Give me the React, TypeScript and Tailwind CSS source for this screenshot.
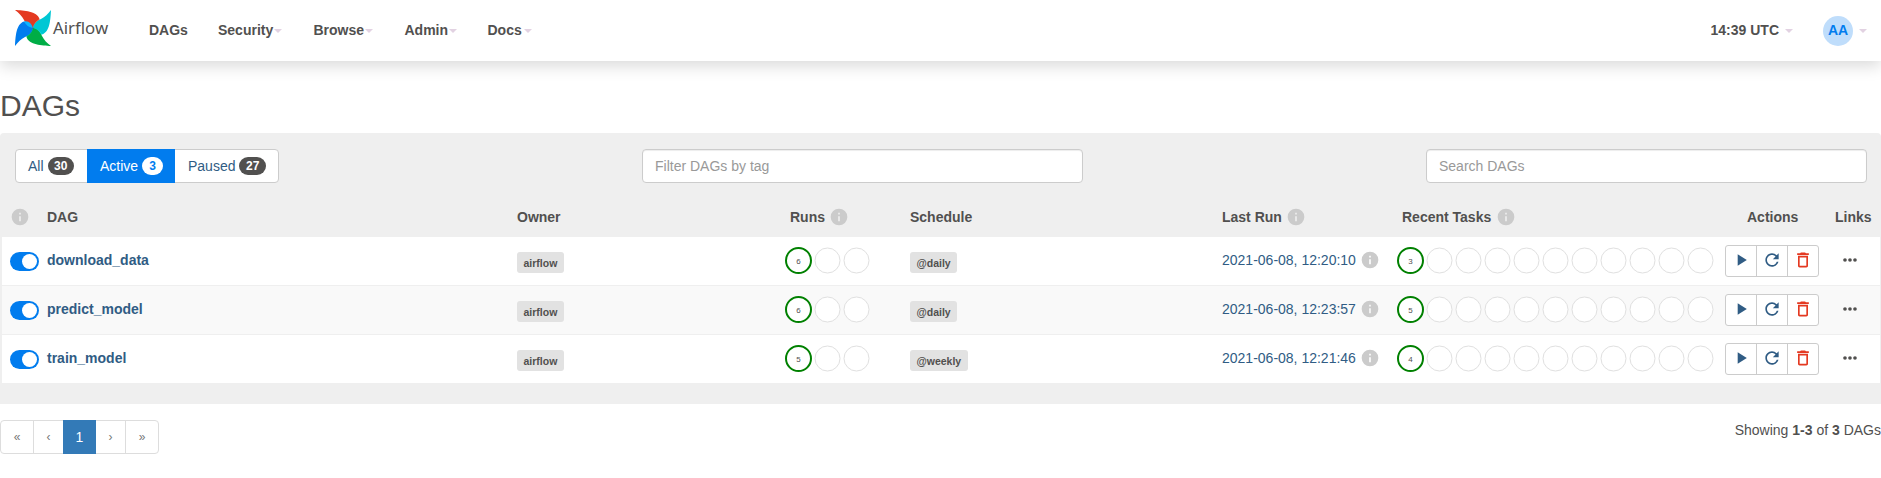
import type { ReactNode } from "react";

const columns =
  "grid grid-cols-[45px_470px_268px_125px_312px_175px_328px_110px_1fr]";

function Caret({ className = "" }: { className?: string }) {
  return (
    <span
      className={`mt-[2px] inline-block border-x-4 border-t-4 border-x-transparent border-t-[#e2d2e2] ${className}`}
    />
  );
}

function Info({ className = "" }: { className?: string }) {
  return (
    <svg viewBox="0 0 20 20" className={`size-5 shrink-0 fill-[#cbcbcb] ${className}`}>
      <path d="M10 1.67a8.33 8.33 0 1 0 0 16.66 8.33 8.33 0 0 0 0-16.66zm.83 12.5H9.17v-5h1.66v5zm0-6.67H9.17V5.83h1.66V7.5z" />
    </svg>
  );
}

const blades = [
  { angle: 0, dark: "#e43921", light: "#ff7557" },
  { angle: 90, dark: "#00c7d4", light: "#11e1ee" },
  { angle: 180, dark: "#00ad46", light: "#04d659" },
  { angle: 270, dark: "#017cee", light: "#0cb6ff" },
];

function Logo() {
  return (
    <svg viewBox="0 0 36 36" className="h-9 w-9 shrink-0">
      {blades.map((b) => (
        <g key={b.angle} transform={`rotate(${b.angle} 18 18)`}>
          <path fill={b.dark} d="M0 0C9 .5 22 1 24.5 9L18 18C12.5 17 10.5 13 9 10C7 6 4 3 0 0Z" />
          <path fill={b.light} d="M24.500 9C25.500 14 22 16.500 18 18C18.500 14 21 11 24.500 9Z" />
        </g>
      ))}
      <circle cx="18" cy="18" r="0.6" fill="#51504f" />
    </svg>
  );
}

function Circles({ count, value }: { count: number; value: number }) {
  return (
    <svg width={count * 29 + 2} height="30" className="-ml-px shrink-0">
      {Array.from({ length: count }, (_, i) => (
        <circle
          key={i}
          cx={14.5 + 29 * i}
          cy="14.5"
          r="12.5"
          fill="#fff"
          stroke={i === 0 ? "#008000" : "#e0e0e0"}
          strokeWidth={i === 0 ? 2 : 1}
        />
      ))}
      <text x="14.5" y="18" textAnchor="middle" fontSize="8" fill="#51504f">
        {value}
      </text>
    </svg>
  );
}

function Tag({ children }: { children: ReactNode }) {
  return (
    <span className="mt-[3px] flex h-[21px] w-fit items-center rounded-[3px] bg-[#e2e2e2] px-[6.5px] text-[10.5px] font-bold">
      {children}
    </span>
  );
}

function Actions() {
  return (
    <div className="flex h-8 w-[94px] divide-x divide-[#ccc] rounded-[3px] border border-[#ccc] bg-white">
      <span className="flex flex-1 items-center justify-center pb-[2px]">
        <svg viewBox="0 0 24 24" className="size-5 fill-[#305c84]">
          <path d="M8 5v14l11-7z" />
        </svg>
      </span>
      <span className="flex flex-1 items-center justify-center pb-[2px]">
        <svg viewBox="0 0 24 24" className="size-5 fill-[#305c84]">
          <path d="M17.65 6.35A7.958 7.958 0 0 0 12 4c-4.42 0-7.99 3.58-7.99 8s3.57 8 7.99 8c3.73 0 6.84-2.55 7.73-6h-2.08A5.99 5.99 0 0 1 12 18c-3.31 0-6-2.69-6-6s2.69-6 6-6c1.66 0 3.14.69 4.22 1.78L13 11h7V4l-2.35 2.35z" />
        </svg>
      </span>
      <span className="flex flex-1 items-center justify-center pb-[2px]">
        <svg viewBox="0 0 24 24" className="size-5 fill-[#e43921]">
          <path d="M6 19c0 1.1.9 2 2 2h8c1.1 0 2-.9 2-2V7H6v12zM8 9h8v10H8V9zm7.5-5l-1-1h-5l-1 1H5v2h14V4z" />
        </svg>
      </span>
    </div>
  );
}

const dags = [
  { name: "download_data", runs: 6, schedule: "@daily", last: "2021-06-08, 12:20:10", tasks: 3 },
  { name: "predict_model", runs: 6, schedule: "@daily", last: "2021-06-08, 12:23:57", tasks: 5 },
  { name: "train_model", runs: 5, schedule: "@weekly", last: "2021-06-08, 12:21:46", tasks: 4 },
];

export default function App() {
  return (
    <div className="h-[478px] w-[1881px] overflow-hidden bg-white font-['Liberation_Sans',Arial,sans-serif] text-[14px] leading-5 text-[#51504f]">
      <nav className="flex h-[61px] items-center bg-white pb-px pl-[15px] font-bold shadow-[0_5px_15px_rgba(0,0,0,0.15)]">
        <div className="flex w-[134px] items-center gap-[2px] pb-[4px]">
          <Logo />
          <span className="font-['Noto_Sans',sans-serif] text-[16.8px] font-normal">Airflow</span>
        </div>
        <span className="w-[69px]">DAGs</span>
        <span className="flex w-[95.5px] items-center">Security<Caret className="ml-px" /></span>
        <span className="flex w-[91px] items-center">Browse<Caret className="ml-px" /></span>
        <span className="flex w-[83px] items-center">Admin<Caret className="ml-px" /></span>
        <span className="flex items-center">Docs<Caret className="ml-[2px]" /></span>
        <div className="ml-auto flex items-center pr-[14px]">
          14:39 UTC
          <Caret className="ml-[6px]" />
          <span className="mt-px ml-[30px] flex size-[30px] items-center justify-center rounded-full bg-[#bfddfb] pb-px text-[#017cee]">
            AA
          </span>
          <Caret className="ml-[6px]" />
        </div>
      </nav>
      <h2 className="mt-[28px] mb-[11px] text-[30px] leading-[33px]">DAGs</h2>

      <main className="h-[271px] rounded-t-[4px] bg-[#efefef] pt-4">
        <div className="flex h-[34px] items-stretch px-[15px] pr-[14px]">
          <div className="flex w-[264px] rounded-[4px] border border-[#ccc] bg-white text-[#305c84]">
            <span className="flex w-[71px] items-center gap-[4px] pl-3">
              All
              <b className="rounded-full bg-[#51504f] px-[6.5px] py-[3px] text-[12px] leading-3 text-white">30</b>
            </span>
            <span className="-my-px flex w-[88px] items-center gap-[4px] bg-[#017cee] pl-[13px] text-white">
              Active
              <b className="rounded-full bg-white px-[7px] py-[3px] text-[12px] leading-3 text-[#017cee]">3</b>
            </span>
            <span className="flex items-center gap-[4px] pl-[13px]">
              Paused
              <b className="rounded-full bg-[#51504f] px-[6.5px] py-[3px] text-[12px] leading-3 text-white">27</b>
            </span>
          </div>
          <div className="ml-[363px] flex w-[441px] items-center rounded-[4px] border border-[#ccc] bg-white px-3 text-[#999] shadow-[inset_0_1px_1px_rgba(0,0,0,0.075)]">
            Filter DAGs by tag
          </div>
          <div className="ml-auto flex w-[441px] items-center rounded-[4px] border border-[#ccc] bg-white px-3 text-[#999] shadow-[inset_0_1px_1px_rgba(0,0,0,0.075)]">
            Search DAGs
          </div>
        </div>

        <div className="mr-[1px] ml-[2px] pt-[14px]">
          <div className={`${columns} h-10 items-center font-bold`}>
            <span className="pl-2"><Info /></span>
            <span>DAG</span>
            <span>Owner</span>
            <span className="flex items-center gap-1 pl-[5px]">Runs<Info /></span>
            <span>Schedule</span>
            <span className="flex items-center gap-1">Last Run<Info /></span>
            <span className="flex items-center gap-[5px] pl-[5px]">Recent Tasks<Info /></span>
            <span className="pl-[22px]">Actions</span>
            <span>Links</span>
          </div>
          {dags.map((dag, i) => (
            <div
              key={dag.name}
              className={`${columns} items-center ${i < 2 ? "h-[49px] border-b border-[#efefef]" : "h-[48px]"} ${i === 1 ? "bg-[#f9f9f9]" : "bg-white"}`}
            >
              <span className="mt-px ml-2 flex h-[19px] w-[29px] items-center justify-end rounded-full bg-[#017cee] pr-[2px]">
                <i className="size-[15px] rounded-full bg-white" />
              </span>
              <b className="pb-[2px] text-[#305c84]">{dag.name}</b>
              <Tag>airflow</Tag>
              <Circles count={3} value={dag.runs} />
              <Tag>{dag.schedule}</Tag>
              <span className="flex items-center gap-1 pb-[2px] text-[#305c84]">
                {dag.last}
                <Info />
              </span>
              <Circles count={11} value={dag.tasks} />
              <Actions />
              <svg viewBox="0 0 24 24" className="mb-[2px] ml-[5px] size-5 fill-[#51504f]">
                <circle cx="6" cy="12" r="2.2" />
                <circle cx="12" cy="12" r="2.2" />
                <circle cx="18" cy="12" r="2.2" />
              </svg>
            </div>
          ))}
        </div>
      </main>

      <footer className="flex items-start justify-between pt-4">
        <div className="flex h-[34px] w-[159px] items-stretch rounded-[4px] border border-[#ddd] text-[#777]">
          <span className="flex w-[33px] items-center justify-center border-r border-[#ddd] text-[12px]">«</span>
          <span className="flex w-[29px] items-center justify-center text-[12px]">‹</span>
          <span className="-my-px flex w-[33px] items-center justify-center bg-[#337ab7] text-white">1</span>
          <span className="flex w-[30px] items-center justify-center border-r border-[#ddd] text-[12px]">›</span>
          <span className="flex w-[32px] items-center justify-center text-[12px]">»</span>
        </div>
        <span>
          Showing <b>1-3</b> of <b>3</b> DAGs
        </span>
      </footer>
    </div>
  );
}
